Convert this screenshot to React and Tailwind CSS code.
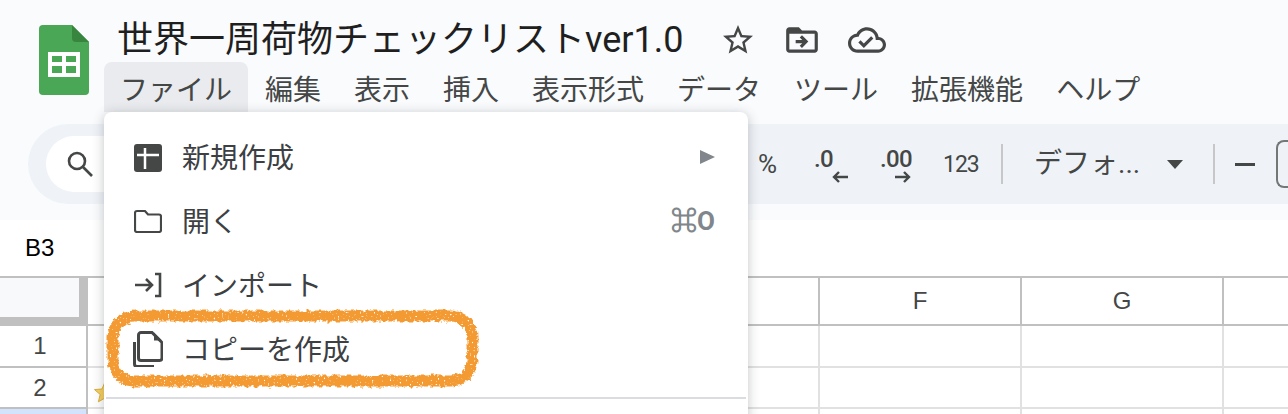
import React from "react";

const JP = "font-['Roboto','Noto_Sans_CJK_JP',sans-serif]";

const Icon = ({ d, className }) => (
  <svg viewBox="0 0 24 24" className={className} fill="#444746">
    <path d={d} />
  </svg>
);

const menuBar = ["ファイル", "編集", "表示", "挿入", "表示形式", "データ", "ツール", "拡張機能", "ヘルプ"];

const SheetsLogo = () => (
  <svg viewBox="0 0 50 70" className="w-[50px] h-[70px] shrink-0">
    <path d="M4 0h29l17 17v49a4 4 0 0 1-4 4H4a4 4 0 0 1-4-4V4a4 4 0 0 1 4-4z" fill="#4aa756" />
    <path d="M33 0l17 17H37a4 4 0 0 1-4-4z" fill="#38853f" />
    <path d="M9 27h32v25H9zM13 31v6h10v-6zM27 31v6h10v-6zM13 41v7h10v-7zM27 41v7h10v-7z" fill="#fff" fillRule="evenodd" />
  </svg>
);

const MenuRow = ({ icon, label, children }) => (
  <div className="h-16 flex items-center pl-[30px] pr-[33px]">
    <div className="w-7 h-7 flex items-center justify-center shrink-0">{icon}</div>
    <span className="ml-5 pt-1 text-[28px] leading-none text-[#3c4043] flex-1">{label}</span>
    {children}
  </div>
);

// hand-drawn highlight around the copy entry
const Scribble = () => (
  <svg className="absolute left-0 top-0 w-[500px] h-[414px] pointer-events-none" viewBox="0 0 500 414">
    <defs>
      <filter id="rough" x="-5%" y="-20%" width="110%" height="140%" colorInterpolationFilters="sRGB">
        <feTurbulence type="fractalNoise" baseFrequency="0.22" numOctaves="3" seed="4" result="warp" />
        <feDisplacementMap in="SourceGraphic" in2="warp" scale="6" xChannelSelector="R" yChannelSelector="G" result="edge" />
        <feTurbulence type="fractalNoise" baseFrequency="0.5" numOctaves="1" seed="9" result="grain" />
        <feColorMatrix in="grain" type="matrix" values="0 0 0 0 0  0 0 0 0 0  0 0 0 0 0  0 0 0 -9 7" result="holes" />
        <feComposite in="edge" in2="holes" operator="in" />
      </filter>
    </defs>
    <rect x="113" y="316" width="359" height="65" rx="21" fill="none" stroke="#f39a33" strokeWidth="11" filter="url(#rough)" />
  </svg>
);

export default function App() {
  return (
    <div className={`relative w-[1288px] h-[414px] overflow-hidden bg-white ${JP}`}>
      {/* Header */}
      <div className="h-[220px] bg-[#f9fbfd] flex flex-col">
        <div className="h-[112px] flex pl-[39px] pt-[25px] shrink-0">
          <SheetsLogo />
          <div className="pl-[15px] -mt-[25px]">
            <div className="h-[62px] flex items-center pl-[13px] pt-[18px]">
              <span className="text-[36px] leading-none text-[#1f1f1f] w-[580px] whitespace-nowrap">世界一周荷物チェックリストver1.0</span>
              <Icon className="w-[36px] h-[36px] ml-[23px]" d="M22 9.24l-7.19-.62L12 2 9.19 8.63 2 9.24l5.46 4.73L5.82 21 12 17.27 18.18 21l-1.63-7.03L22 9.24zM12 15.4l-3.76 2.27 1-4.28-3.32-2.88 4.38-.38L12 6.1l1.71 4.04 4.38.38-3.32 2.88 1 4.28L12 15.4z" />
              <Icon className="w-[38px] h-[38px] ml-[27px]" d="M4 6h5.17l2 2H4zM20 6h-8l-2-2H4c-1.1 0-2 .9-2 2v12c0 1.1.9 2 2 2h16c1.1 0 2-.9 2-2V8c0-1.1-.9-2-2-2zm0 12H4V6h5.17l2 2H20v10zm-8.01-9l-1.41 1.41L12.16 12H8v2h4.16l-1.59 1.59L11.99 17 16 13.01 11.99 9z" />
              <Icon className="w-[38px] h-[38px] ml-[27px]" d="M19.35 10.04C18.67 6.59 15.64 4 12 4 9.11 4 6.6 5.64 5.35 8.04 2.34 8.36 0 10.91 0 14c0 3.31 2.69 6 6 6h13c2.76 0 5-2.24 5-5 0-2.64-2.05-4.78-4.65-4.96zM19 18H6c-2.21 0-4-1.79-4-4s1.79-4 4-4h.71C7.37 7.69 9.48 6 12 6c3.04 0 5.5 2.46 5.5 5.5v.5H19c1.66 0 3 1.34 3 3s-1.34 3-3 3zm-9-3.82l-2.09-2.09L6.5 13.5 10 17l6.01-6.01-1.41-1.41z" />
            </div>
            <div className="flex gap-px h-[50px]">
              {menuBar.map((m, i) => (
                <div key={m} className={`px-4 pt-2 flex items-center text-[28px] leading-none text-[#444746] whitespace-nowrap rounded-t-lg ${i === 0 ? "bg-[#e9ebee]" : ""}`}>
                  {m}
                </div>
              ))}
            </div>
          </div>
        </div>

        {/* Toolbar */}
        <div className="mt-3 ml-7 h-20 w-[1260px] bg-[#eff3f8] rounded-l-[40px] flex items-center pl-[18px] shrink-0">
          <div className="w-[200px] h-14 bg-white rounded-l-[28px] flex items-center pl-[20px] shrink-0">
            <svg viewBox="0 0 28 28" className="w-7 h-7" fill="none" stroke="#444746" strokeWidth="2.6">
              <circle cx="11" cy="11" r="8" />
              <path d="M17 17l9 9" />
            </svg>
          </div>
          <div className="ml-[512px] flex items-center text-[#444746] shrink-0">
            <span className="text-[26px] leading-none w-[47px]">%</span>
            <div className="w-[72px] relative h-10 pl-[9px] pt-[3px] text-[24px] leading-none font-medium tracking-tight">
              .0
              <svg viewBox="0 0 16 12" className="absolute left-[27px] top-[27px] w-4 h-3" fill="none" stroke="#444746" strokeWidth="2.4"><path d="M16 6H2M7 1L2 6l5 5" /></svg>
            </div>
            <div className="w-[66px] relative h-10 pl-[3px] pt-[3px] text-[24px] leading-none font-medium tracking-tight">
              .00
              <svg viewBox="0 0 16 12" className="absolute left-[18px] top-[27px] w-4 h-3" fill="none" stroke="#444746" strokeWidth="2.4"><path d="M0 6h14M9 1l5 5-5 5" /></svg>
            </div>
            <span className="text-[23px] leading-none tracking-[-1px] w-[58px]">123</span>
            <div className="w-0.5 h-10 bg-[#c7c7c7]" />
            <span className="ml-[31px] w-[133px] text-[28px] leading-none whitespace-nowrap">デフォ...</span>
            <div className="w-0 h-0 border-x-[8px] border-x-transparent border-t-[9px] border-t-[#444746]" />
            <div className="ml-[30px] w-0.5 h-10 bg-[#c7c7c7]" />
            <div className="ml-[20px] w-5 h-[3px] bg-[#444746]" />
            <div className="ml-[21px] w-[20px] h-12 border-2 border-r-0 border-[#747775] rounded-l-lg" />
          </div>
        </div>
      </div>

      {/* Name box row */}
      <div className="h-14 flex items-center pl-[25px] font-['Liberation_Sans',sans-serif] text-[24px] leading-none text-black">B3</div>

      {/* Grid */}
      <div className="grid grid-cols-[88px_730px_202px_202px_66px] grid-rows-[50px_42px_41px_20px] font-['Liberation_Sans',sans-serif] text-[24px] text-[#444746]">
        <div className="bg-[#c0c0c0] border-t-2 border-[#c0c0c0] pr-[9px] pb-[9px]">
          <div className="h-full bg-[#f8f9fa]" />
        </div>
        <div className="border-t-2 border-b-2 border-[#c0c0c0]" />
        <div className="border-t-2 border-b-2 border-l-2 border-[#c0c0c0] flex items-center justify-center leading-none">F</div>
        <div className="border-t-2 border-b-2 border-l-2 border-[#c0c0c0] flex items-center justify-center leading-none">G</div>
        <div className="border-t-2 border-b-2 border-l-2 border-[#c0c0c0]" />

        <div className="border-r-2 border-b-2 border-[#c0c0c0] flex items-center justify-center pr-[6px] leading-none">1</div>
        <div className="border-b-2 border-[#e1e1e1]" />
        <div className="border-b-2 border-l-2 border-[#e1e1e1]" />
        <div className="border-b-2 border-l-2 border-[#e1e1e1]" />
        <div className="border-b-2 border-l-2 border-[#e1e1e1]" />

        <div className="border-r-2 border-b-2 border-[#c0c0c0] flex items-center justify-center pr-[6px] leading-none">2</div>
        <div className="border-b-2 border-[#e1e1e1] pl-[5px] pt-[12px]">
          <svg viewBox="0 0 24 24" className="w-6 h-6"><path d="M12 2l3 7 7.5.6-5.700 4.900 1.800 7.300L12 18l-6.600 3.800 1.800-7.300L1.500 9.600 9 9z" fill="#f5cf5f" stroke="#dcae3a" /></svg>
        </div>
        <div className="border-b-2 border-l-2 border-[#e1e1e1]" />
        <div className="border-b-2 border-l-2 border-[#e1e1e1]" />
        <div className="border-b-2 border-l-2 border-[#e1e1e1]" />

        <div className="bg-[#d3e3fd] border-r-2 border-[#c0c0c0]" />
        <div />
        <div className="border-l-2 border-[#e1e1e1]" />
        <div className="border-l-2 border-[#e1e1e1]" />
        <div className="border-l-2 border-[#e1e1e1]" />
      </div>

      {/* File menu dropdown */}
      <div className="absolute left-[104px] top-[112px] w-[644px] h-[320px] bg-white rounded-lg shadow-[0_2px_12px_rgba(60,64,67,0.3)] pt-[13px]">
        <MenuRow
          label="新規作成"
          icon={
            <svg viewBox="0 0 28 28" className="w-7 h-7 mt-0.5">
              <rect width="28" height="28" rx="3" fill="#444746" />
              <path d="M3 11h22M11 4v21" stroke="#fff" strokeWidth="2.500" />
            </svg>
          }
        >
          <div className="w-0 h-0 border-y-[7px] border-y-transparent border-l-[15px] border-l-[#80868b]" />
        </MenuRow>
        <MenuRow
          label="開く"
          icon={
            <svg viewBox="0 0 28 24" className="w-7 h-6" fill="none" stroke="#444746" strokeWidth="2.200">
              <path d="M3 2h8l3 3.500h11a2 2 0 0 1 2 2V21a2 2 0 0 1-2 2H3a2 2 0 0 1-2-2V4a2 2 0 0 1 2-2z" />
            </svg>
          }
        >
          <span className="text-[26px] font-bold leading-none text-[#80868b]">
            <span className="[-webkit-text-stroke:1px_#80868b]">⌘</span>O
          </span>
        </MenuRow>
        <MenuRow
          label="インポート"
          icon={
            <svg viewBox="0 0 28 28" className="w-7 h-7" fill="none" stroke="#444746" strokeWidth="2.600">
              <path d="M1 14h17M12 8l6 6-6 6M21 3h5v22h-5" />
            </svg>
          }
        />
        <MenuRow
          label="コピーを作成"
          icon={
            <svg viewBox="0 0 30 36" className="w-[30px] h-9 shrink-0" fill="none" stroke="#444746" strokeWidth="3">
              <path d="M1.500 11v22a2.500 2.500 0 0 0 2.500 2.500H21" />
              <path d="M8 1.500h11l10 10V27a2.500 2.500 0 0 1-2.500 2.500H8A2.500 2.500 0 0 1 5.500 27V4A2.500 2.500 0 0 1 8 1.500z" />
              <path d="M21 1.500l8 8h-8z" fill="#444746" stroke="none" />
            </svg>
          }
        />
        <div className="mt-4 mx-0.5 h-0.5 bg-[#dadce0]" />
      </div>

      <Scribble />
    </div>
  );
}
